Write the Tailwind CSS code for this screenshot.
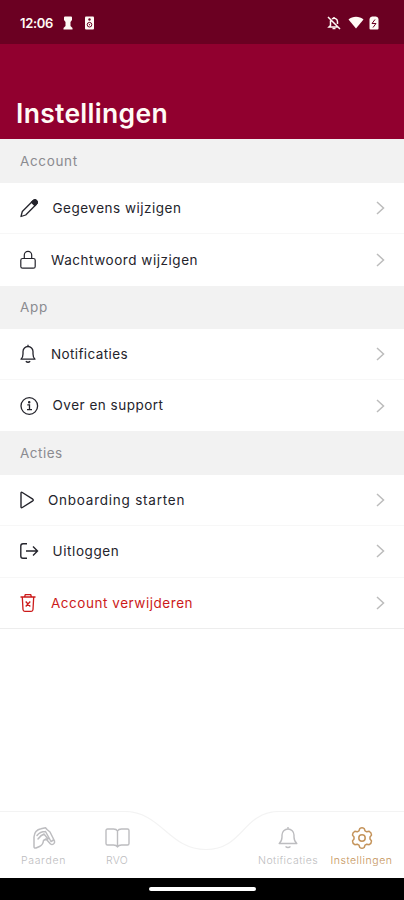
<!DOCTYPE html>
<html lang="nl">
<head>
<meta charset="utf-8">
<title>Instellingen</title>
<script src="https://cdn.jsdelivr.net/npm/@tailwindcss/browser@4"></script>
</head>
<body class="w-[404px] h-[900px] overflow-hidden bg-white font-['Inter',sans-serif] flex flex-col text-[#24242c]">
<header class="h-[139px] shrink-0 bg-[#91002f] flex flex-col text-[#fffaf5]">
  <div class="h-[44px] bg-[#6b0022] flex items-center pl-[20px] pr-[25px]">
    <span class="text-[13px] font-semibold leading-none w-[34px] mt-[2px] whitespace-nowrap tracking-[-0.3px]">12:06</span>
    <svg class="ml-[9px] mt-[2px]" width="10" height="14" viewBox="0 0 10 14" fill="currentColor"><path d="M1 1.500Q1 .5 2 .5H8Q9 .5 9 1.500V4L7.500 6v4L9.500 12v1.500H.5V12L2.500 10V6L1 4z"/></svg>
    <svg class="ml-[11px] mt-[2px]" width="11" height="14" viewBox="0 0 11 14"><rect x="1" y=".5" width="9" height="13" rx="1" fill="#fffaf5"/><circle cx="5.500" cy="3.500" r="1.200" fill="#6b0022"/><circle cx="5.500" cy="8.700" r="2.300" fill="none" stroke="#6b0022"/><circle cx="5.500" cy="8.700" r=".6" fill="#6b0022"/></svg>
    <svg class="ml-auto mt-[2px]" width="14" height="14" viewBox="0 0 14 14" fill="none" stroke="currentColor" stroke-width="1.500"><path d="M1 1l12 12M3.500 4.500v5L2 11h8.500M5 3a3.400 3.400 0 0 1 5.500 2.700V8M7 1v1.500"/><path d="M5.500 12.500h3"/></svg>
    <svg class="ml-[7px] mt-[1px]" width="16" height="13" viewBox="0 0 16 13" fill="currentColor"><path d="M.5 3.500C4.500-.1 11.500-.1 15.500 3.500L8 12.500z"/></svg>
    <svg class="ml-[5px] mt-[2px]" width="10" height="14" viewBox="0 0 10 14"><path d="M3 .5h4Q9.500 1 9.500 3v9.500q0 1-1 1h-7q-1 0-1-1V3Q.5 1 3 .5z" fill="#fffaf5"/><path d="M6 3.500L3 7.500h4L4 11.500" stroke="#6b0022" fill="none"/></svg>
  </div>
  <h1 class="mt-auto pl-[16px] mb-[11px] text-[26.500px] leading-[30px] font-semibold tracking-[0.3px] whitespace-nowrap">Instellingen</h1>
</header>
<main class="flex-1 flex flex-col text-[13.5px] whitespace-nowrap">
  <h2 class="h-[44px] shrink-0 bg-[#f2f2f2] flex items-center pl-[20px] text-[#8b8b90]"><span class="tracking-[0.65px]">Account</span></h2>
  <div class="h-[51px] shrink-0 flex items-center pl-[20px] pr-[19px] border-b border-[#f7f7f7]">
    <svg width="19" height="20" viewBox="0 0 19 20" fill="none" stroke="currentColor" stroke-width="1.300" stroke-linejoin="round"><path d="M1 18.500l1.300-5L13 2.800q1.800-1.500 3.400 0t0 3.400L5.700 17z"/><path d="M11.500 4.200L14 2q1.300-.8 2.500.4t.8 2.600L14.800 7.500z" fill="currentColor"/></svg>
    <span class="ml-[13.500px] tracking-[0.5px]">Gegevens wijzigen</span>
    <svg class="ml-auto" width="9" height="14" viewBox="0 0 9 14" fill="none" stroke="#bcbcbc" stroke-width="1.500"><path d="M1 1l6.500 6L1 13"/></svg>
  </div>
  <div class="h-[51.500px] shrink-0 flex items-center pl-[20px] pr-[19px]">
    <svg width="16" height="20" viewBox="0 0 16 20" fill="none" stroke="currentColor" stroke-width="1.200"><rect x=".8" y="8.500" width="14.400" height="9.700" rx="1.800"/><path d="M4.300 8.500V5a3.700 3.700 0 0 1 7.400 0v3.500"/></svg>
    <span class="ml-[15px] tracking-[0.54px]">Wachtwoord wijzigen</span>
    <svg class="ml-auto" width="9" height="14" viewBox="0 0 9 14" fill="none" stroke="#bcbcbc" stroke-width="1.500"><path d="M1 1l6.500 6L1 13"/></svg>
  </div>
  <h2 class="h-[43.500px] shrink-0 bg-[#f2f2f2] flex items-center pl-[20px] text-[#8b8b90]"><span class="tracking-[0.65px]">App</span></h2>
  <div class="h-[51px] shrink-0 flex items-center pl-[20px] pr-[19px] border-b border-[#f7f7f7]">
    <svg width="16" height="20" viewBox="0 0 16 20" fill="none" stroke="currentColor" stroke-width="1.300" stroke-linejoin="round"><path d="M1 15.200Q3 13.500 3 10V7.500a5 5 0 0 1 10 0V10q0 3.500 2 5.200zM8 .8v1.700"/><path d="M5.800 17.300q2.200 2 4.400 0"/></svg>
    <span class="ml-[15px] tracking-[0.38px]">Notificaties</span>
    <svg class="ml-auto" width="9" height="14" viewBox="0 0 9 14" fill="none" stroke="#bcbcbc" stroke-width="1.500"><path d="M1 1l6.500 6L1 13"/></svg>
  </div>
  <div class="h-[51px] shrink-0 flex items-center pl-[20px] pr-[19px]">
    <svg width="19" height="20" viewBox="0 0 19 20" fill="none" stroke="currentColor" stroke-width="1.300"><circle cx="9.300" cy="10" r="8.300"/><path d="M7.300 8.800h2.200v4.700M7 13.700h5"/><circle cx="9.200" cy="6.200" r=".6" fill="currentColor"/></svg>
    <span class="ml-[13.500px] tracking-[0.5px]">Over en support</span>
    <svg class="ml-auto" width="9" height="14" viewBox="0 0 9 14" fill="none" stroke="#bcbcbc" stroke-width="1.500"><path d="M1 1l6.500 6L1 13"/></svg>
  </div>
  <h2 class="h-[44px] shrink-0 bg-[#f2f2f2] flex items-center pl-[20px] text-[#8b8b90]"><span class="tracking-[0.5px]">Acties</span></h2>
  <div class="h-[51px] shrink-0 flex items-center pl-[20px] pr-[19px] border-b border-[#f7f7f7]">
    <svg width="15" height="20" viewBox="0 0 15 20" fill="none" stroke="currentColor" stroke-width="1.400" stroke-linejoin="round"><path d="M1 3.200q0-1.500 1.300-.7l10.500 6.700q1 .8 0 1.600L2.300 17.500Q1 18.300 1 16.800z"/></svg>
    <span class="ml-[13px] tracking-[0.76px]">Onboarding starten</span>
    <svg class="ml-auto" width="9" height="14" viewBox="0 0 9 14" fill="none" stroke="#bcbcbc" stroke-width="1.500"><path d="M1 1l6.500 6L1 13"/></svg>
  </div>
  <div class="h-[51.500px] shrink-0 flex items-center pl-[20px] pr-[19px] border-b border-[#f7f7f7]">
    <svg width="19" height="20" viewBox="0 0 19 20" fill="none" stroke="currentColor" stroke-width="1.400"><path d="M7 2.800H3q-2.200 0-2.200 2.200v10q0 2.200 2.200 2.200h4M6 10h11.500M13 5.500l4.500 4.500-4.500 4.500"/></svg>
    <span class="ml-[13.500px] tracking-[0.6px]">Uitloggen</span>
    <svg class="ml-auto" width="9" height="14" viewBox="0 0 9 14" fill="none" stroke="#bcbcbc" stroke-width="1.500"><path d="M1 1l6.500 6L1 13"/></svg>
  </div>
  <div class="h-[51.500px] shrink-0 flex items-center pl-[20px] pr-[19px] border-b border-[#ededed] text-[#cc1a1a]">
    <svg width="16" height="20" viewBox="0 0 16 20" fill="none" stroke="currentColor" stroke-width="1.300"><path d="M.5 4h15M2.300 4l.7 12.500q.1 1.800 1.800 1.800h6.400q1.700 0 1.800-1.800L13.700 4M4.500 4l.8-2.300h5.400l.8 2.300M5.700 8.500l4.600 5M10.300 8.500l-4.600 5"/></svg>
    <span class="ml-[15px] tracking-[0.54px]">Account verwijderen</span>
    <svg class="ml-auto" width="9" height="14" viewBox="0 0 9 14" fill="none" stroke="#bcbcbc" stroke-width="1.500"><path d="M1 1l6.500 6L1 13"/></svg>
  </div>
</main>
<nav class="h-[67px] shrink-0 relative flex justify-between text-[#bdbdc0] text-[10.500px] leading-[14px] font-light whitespace-nowrap">
  <svg class="absolute inset-0" width="404" height="67" viewBox="0 0 404 67" fill="none" stroke="#f3f3f3" stroke-width="1.200"><path d="M0 .5H124C162 .5 168 38.500 206 38.500S242 .5 280 .5H404"/></svg>
  <div class="relative w-[87px] pt-[15px] flex flex-col items-center">
    <svg width="24" height="24" viewBox="0 0 24 24" fill="none" stroke="currentColor" stroke-width="1.500" stroke-linejoin="round" stroke-linecap="round"><path d="M2 20.500V11Q2.500 4 9 2.800l4.500-1L15 3.500l3 2.500 4.500 9q.5 2-1 3t-3 0L14 13l-2.500 1.500Q11 19 7.500 20.500L4 22Q2 22.500 2 20.500zM5 9.500Q8 5.500 13.500 5.500M6 13Q9 9 12 8l4 5M13.500 5.500L19 15.500l2.500-1.500"/></svg>
    <span class="mt-[4px] tracking-[0.7px]">Paarden</span>
  </div>
  <div class="relative w-[60px] pt-[15px] flex flex-col items-center mr-auto">
    <svg width="25" height="24" viewBox="0 0 25 24" fill="none" stroke="currentColor" stroke-width="1.400" stroke-linejoin="round"><path d="M12.500 5Q11.500 3 8.500 3h-6Q1 3 1 4.500v13Q1 19 2.500 19h6q3 0 4 2 1-2 4-2h6q1.500 0 1.500-1.500v-13Q24 3 22.500 3h-6q-3 0-4 2zV21"/></svg>
    <span class="mt-[4px] tracking-[0.3px]">RVO</span>
  </div>
  <div class="relative w-[74px] pt-[15px] flex flex-col items-center">
    <svg width="20" height="24" viewBox="0 0 20 24" fill="none" stroke="currentColor" stroke-width="1.400" stroke-linejoin="round"><path d="M1.200 17.500Q4 15 4 11V9a6 6 0 0 1 12 0v2q0 4 2.800 6.500zM10 1v2M7.500 20.500q2.500 2 5 0"/></svg>
    <span class="mt-[4px] tracking-[0.45px]">Notificaties</span>
  </div>
  <div class="relative w-[73px] mr-[6px] pt-[15px] flex flex-col items-center text-[#c4935a]">
    <svg width="24" height="24" viewBox="0 0 24 24" fill="none" stroke="currentColor" stroke-width="1.500" stroke-linejoin="round"><path d="M9.800 2.500q2.200-1.500 4.400 0l.8 2.300 1.800 1 2.400-.5q2.300 1.200 2.300 3.800L20 11v2l1.500 1.900q0 2.600-2.300 3.800l-2.400-.5-1.800 1-.8 2.300q-2.200 1.500-4.400 0L9 19.200l-1.800-1-2.400.5q-2.300-1.200-2.300-3.800L4 13v-2L2.500 9.100q0-2.600 2.300-3.800l2.400.5 1.800-1z"/><circle cx="12" cy="12" r="3.200"/></svg>
    <span class="mt-[4px] tracking-[0.55px]">Instellingen</span>
  </div>
</nav>
<footer class="h-[22.500px] shrink-0 bg-black flex justify-center items-center"><div class="w-[107px] h-[4px] rounded-full bg-white"></div></footer>
</body>
</html>
